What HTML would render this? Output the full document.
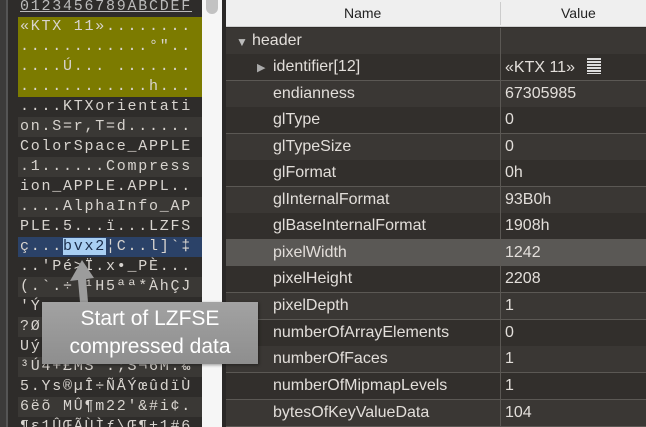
<!DOCTYPE html>
<html><head><meta charset="utf-8"><style>
*{margin:0;padding:0;box-sizing:border-box}
html,body{width:646px;height:427px;overflow:hidden}
body{background:#f4f4f4;position:relative;font-family:"Liberation Sans",sans-serif}
#hex{position:absolute;left:0;top:0;width:202px;height:427px;background:#2e2c2a;overflow:hidden}
#hex .edge{position:absolute;left:0;top:0;width:8px;height:427px;background:#3c3b3a;border-right:2px solid #555}
#hex .l{position:absolute;left:18px;width:184px;height:20px;font-family:"Liberation Mono",monospace;font-size:15px;letter-spacing:1.75px;color:#d8d4cf;line-height:20px;white-space:pre;padding-left:2px}
#hex .a{background:#3a3835}
#hex .hl{background:#7c7b00}
#hex .sel{background:#2b4268}
.bv{background:#a9cff3;color:#1a2c4a}
#gap{position:absolute;left:202px;top:0;width:20px;height:427px;background:#f6f6f6}
#thumb{position:absolute;left:206px;top:0;width:12px;height:14px;background:#c2c2c2;border-radius:0 0 6px 6px}
#tbl{position:absolute;left:222px;top:0;width:424px;height:427px;background:#2f2c2a;border-left:4px solid #2a2827;overflow:hidden}
.hd{position:absolute;left:0;top:0;width:424px;height:27px;background:#efefef;border-bottom:1px solid #cfcfcf;color:#222;font-size:14px}
.hd span{position:absolute;top:5px}
.r{position:absolute;left:0;width:424px;height:27px;border-bottom:1px solid #5b5854;color:#e2deda;font-size:16px}
.r .n{position:absolute;left:47px;top:4px}
.r .v{position:absolute;left:279px;top:4px}
.r.o{background:#3a3734}
.r.e{background:#322f2c}
.r.s{background:#5a5855}
.vl{position:absolute;left:274px;top:28px;width:1px;height:399px;background:#5b5854}
#box{position:absolute;left:42px;top:302px;width:216px;height:62px;background:linear-gradient(#a2a2a2,#8e8e8e);color:#fff;font-size:21px;text-align:center;line-height:28px;padding-top:3px;box-shadow:1px 1px 3px rgba(0,0,0,.4)}
</style></head><body>
<div id="hex">
<div class="edge"></div>
<div class="l" style="top:-3px;color:#bbb;text-decoration:underline">0123456789ABCDEF</div>
<div class="l hl" style="top:17px">«KTX 11»........</div>
<div class="l hl" style="top:37px">............°"..</div>
<div class="l hl" style="top:57px">....Ú... .......</div>
<div class="l hl" style="top:77px">............h...</div>
<div class="l" style="top:97px">....KTXorientati</div>
<div class="l a" style="top:117px">on.S=r,T=d......</div>
<div class="l" style="top:137px">ColorSpace_APPLE</div>
<div class="l a" style="top:157px">.1......Compress</div>
<div class="l" style="top:177px">ion_APPLE.APPL..</div>
<div class="l a" style="top:197px">....AlphaInfo_AP</div>
<div class="l" style="top:217px">PLE.5...ï...LZFS</div>
<div class="l sel" style="top:237px">ç...<span class="bv">bvx2</span>¦C..l]`‡</div>
<div class="l" style="top:257px">..'Pé>Ï.x•_PÈ...</div>
<div class="l a" style="top:277px">(.`.÷ ¹H5ªª*ÀhÇJ</div>
<div class="l" style="top:297px">'Ý</div>
<div class="l a" style="top:317px">?Ø</div>
<div class="l" style="top:337px">Uý</div>
<div class="l a" style="top:357px">³Ú4+£MS .;S¬6M.‰</div>
<div class="l" style="top:377px">5.Ys®µÎ÷ÑÅÝœûdïÙ</div>
<div class="l a" style="top:397px">6ëõ MÛ¶m22'&amp;#i¢.</div>
<div class="l" style="top:417px">¶ε1ÛŒÃÙÌƒ\Œ¶±1#6</div>
</div>
<div id="gap"></div><div id="thumb"></div>
<div id="tbl">
<div class="hd"><span style="left:118px">Name</span><span style="left:335px">Value</span><div style="position:absolute;left:274px;top:2px;width:1px;height:23px;background:#ccc"></div></div>
<div class="r o" style="top:28px"><span class="n" style="left:10px;font-size:12px;top:7px;color:#bbb">▼</span><span class="n" style="left:26px">header</span></div>
<div class="r e" style="top:54px"><span class="n" style="left:31px;font-size:11px;top:7px;color:#aaa">▶</span><span class="n">identifier[12]</span><span class="v">«KTX 11» <span style="display:inline-block;width:14px;height:16px;margin-left:8px;vertical-align:-2px;background:repeating-linear-gradient(#ddd 0 2px,transparent 2px 3px)"></span></span></div>
<div class="r o" style="top:81px"><span class="n">endianness</span><span class="v">67305985</span></div>
<div class="r e" style="top:107px"><span class="n">glType</span><span class="v">0</span></div>
<div class="r o" style="top:134px"><span class="n">glTypeSize</span><span class="v">0</span></div>
<div class="r e" style="top:160px"><span class="n">glFormat</span><span class="v">0h</span></div>
<div class="r o" style="top:187px"><span class="n">glInternalFormat</span><span class="v">93B0h</span></div>
<div class="r e" style="top:213px"><span class="n">glBaseInternalFormat</span><span class="v">1908h</span></div>
<div class="r s" style="top:240px"><span class="n">pixelWidth</span><span class="v">1242</span></div>
<div class="r e" style="top:266px"><span class="n">pixelHeight</span><span class="v">2208</span></div>
<div class="r o" style="top:293px"><span class="n">pixelDepth</span><span class="v">1</span></div>
<div class="r e" style="top:320px"><span class="n">numberOfArrayElements</span><span class="v">0</span></div>
<div class="r o" style="top:346px"><span class="n">numberOfFaces</span><span class="v">1</span></div>
<div class="r e" style="top:373px"><span class="n">numberOfMipmapLevels</span><span class="v">1</span></div>
<div class="r o" style="top:400px"><span class="n">bytesOfKeyValueData</span><span class="v">104</span></div>
<div class="vl"></div>
</div>
<svg style="position:absolute;left:0;top:0" width="300" height="427"><polygon points="80,302 78,280 70,281 82,260 94,278 86,279 88,302" fill="#9c9c9c"/></svg>
<div id="box">Start of LZFSE<br>compressed data</div>
</body></html>
